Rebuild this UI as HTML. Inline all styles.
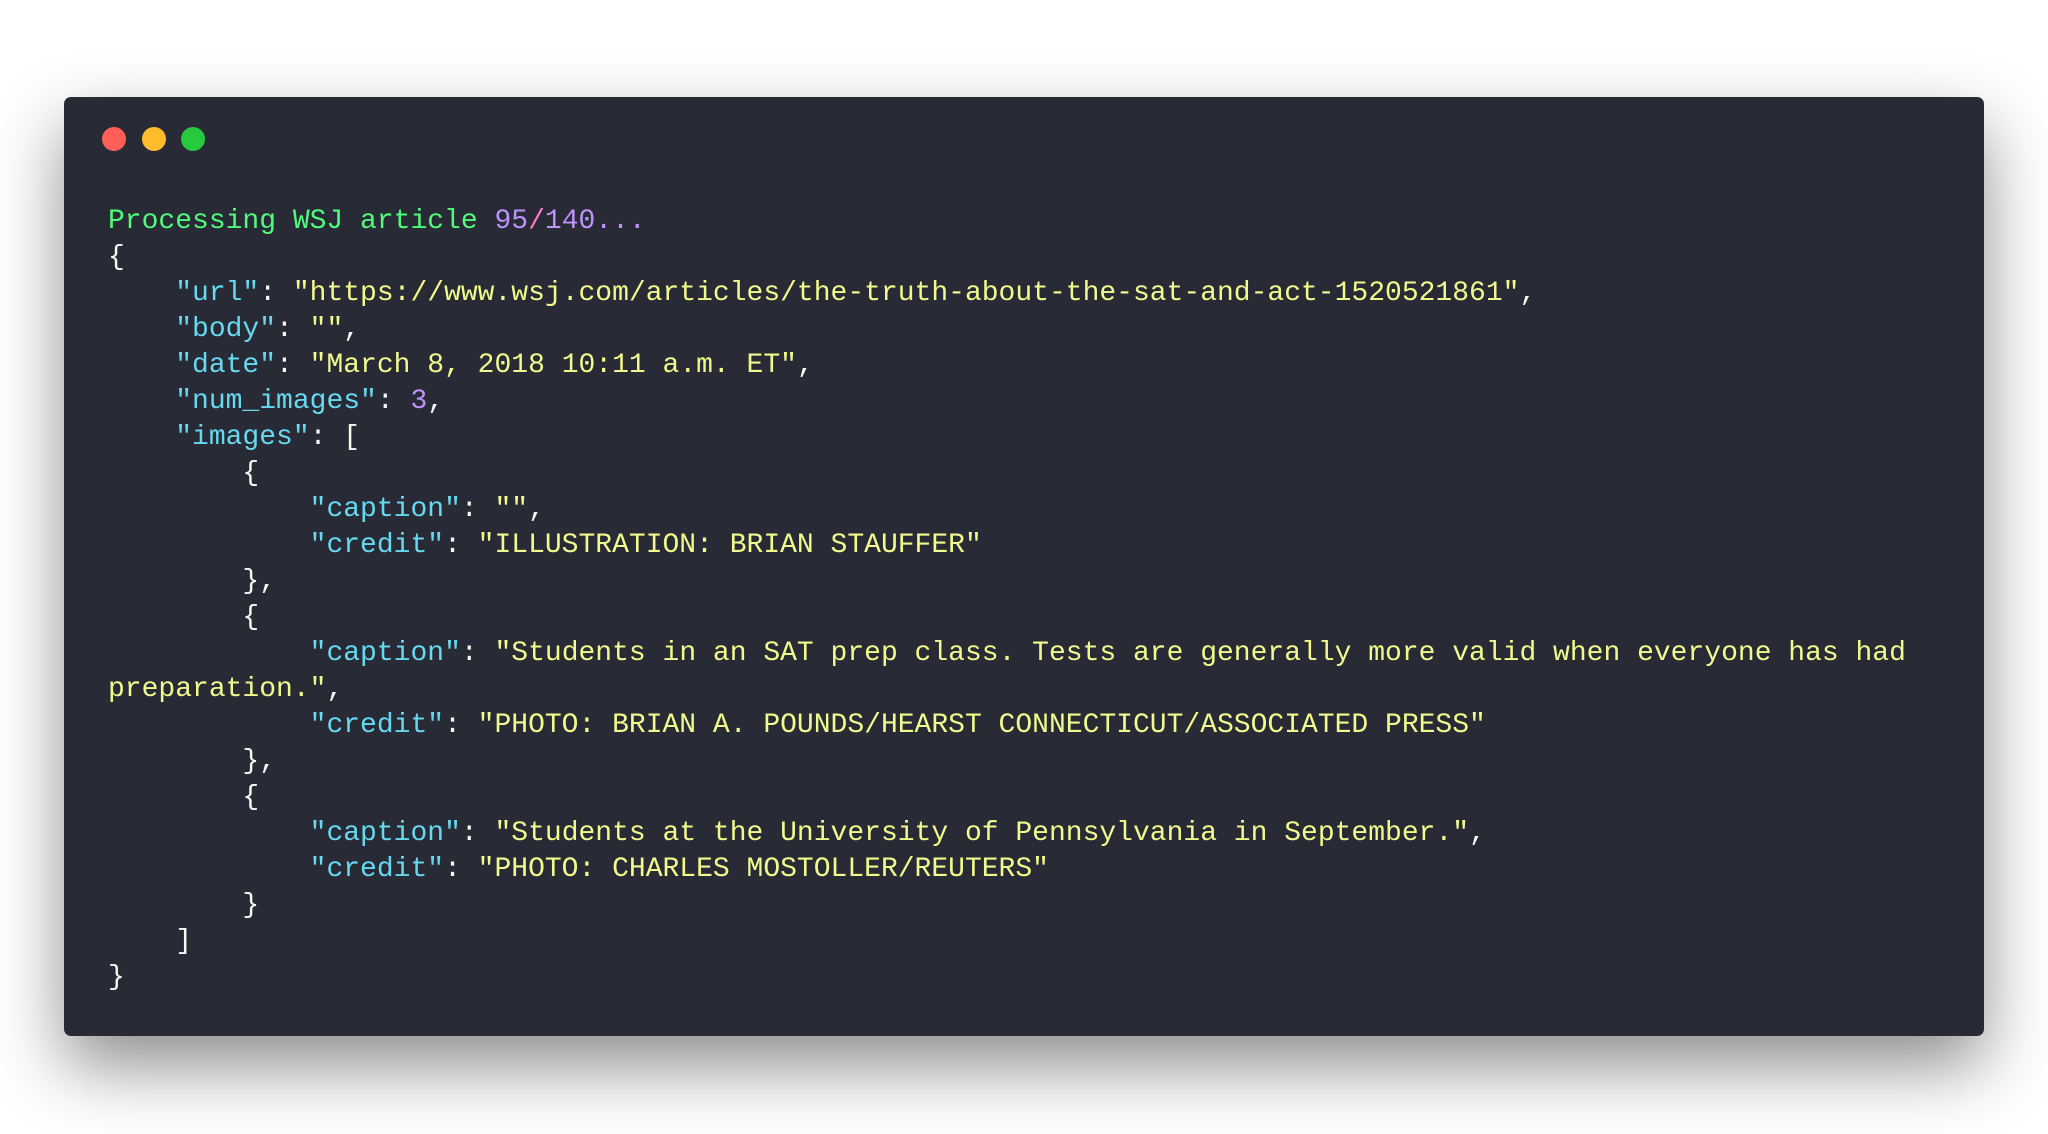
<!DOCTYPE html>
<html><head><meta charset="utf-8"><style>
html,body{margin:0;padding:0;background:#fff;width:2048px;height:1134px;overflow:hidden}
.win{position:absolute;left:64px;top:97px;width:1920px;height:939px;background:#282a36;border-radius:7px;box-shadow:0 30px 70px rgba(0,0,0,0.45)}
.dot{position:absolute;top:127px;width:24px;height:24px;border-radius:50%}
pre{position:absolute;left:108px;top:204px;margin:0;font-family:"Liberation Mono",monospace;font-size:28px;line-height:36px;color:#f8f8f2;white-space:pre}
.g{color:#50fa7b}.p{color:#bd93f9}.k{color:#66d9ef}.s{color:#f1fa8c}.r{color:#ff79c6}
</style></head><body>
<div class="win"></div>
<div class="dot" style="left:102px;background:#ff5f56"></div>
<div class="dot" style="left:142px;background:#ffbd2e"></div>
<div class="dot" style="left:181px;background:#27c93f"></div>
<pre><span class="g">Processing WSJ article </span><span class="p">95</span><span class="r">/</span><span class="p">140...</span>
{
    <span class="k">"url"</span>: <span class="s">"https://www.wsj.com/articles/the-truth-about-the-sat-and-act-1520521861"</span>,
    <span class="k">"body"</span>: <span class="s">""</span>,
    <span class="k">"date"</span>: <span class="s">"March 8, 2018 10:11 a.m. ET"</span>,
    <span class="k">"num_images"</span>: <span class="p">3</span>,
    <span class="k">"images"</span>: [
        {
            <span class="k">"caption"</span>: <span class="s">""</span>,
            <span class="k">"credit"</span>: <span class="s">"ILLUSTRATION: BRIAN STAUFFER"</span>
        },
        {
            <span class="k">"caption"</span>: <span class="s">"Students in an SAT prep class. Tests are generally more valid when everyone has had</span>
<span class="s">preparation."</span>,
            <span class="k">"credit"</span>: <span class="s">"PHOTO: BRIAN A. POUNDS/HEARST CONNECTICUT/ASSOCIATED PRESS"</span>
        },
        {
            <span class="k">"caption"</span>: <span class="s">"Students at the University of Pennsylvania in September."</span>,
            <span class="k">"credit"</span>: <span class="s">"PHOTO: CHARLES MOSTOLLER/REUTERS"</span>
        }
    ]
}</pre>
</body></html>
